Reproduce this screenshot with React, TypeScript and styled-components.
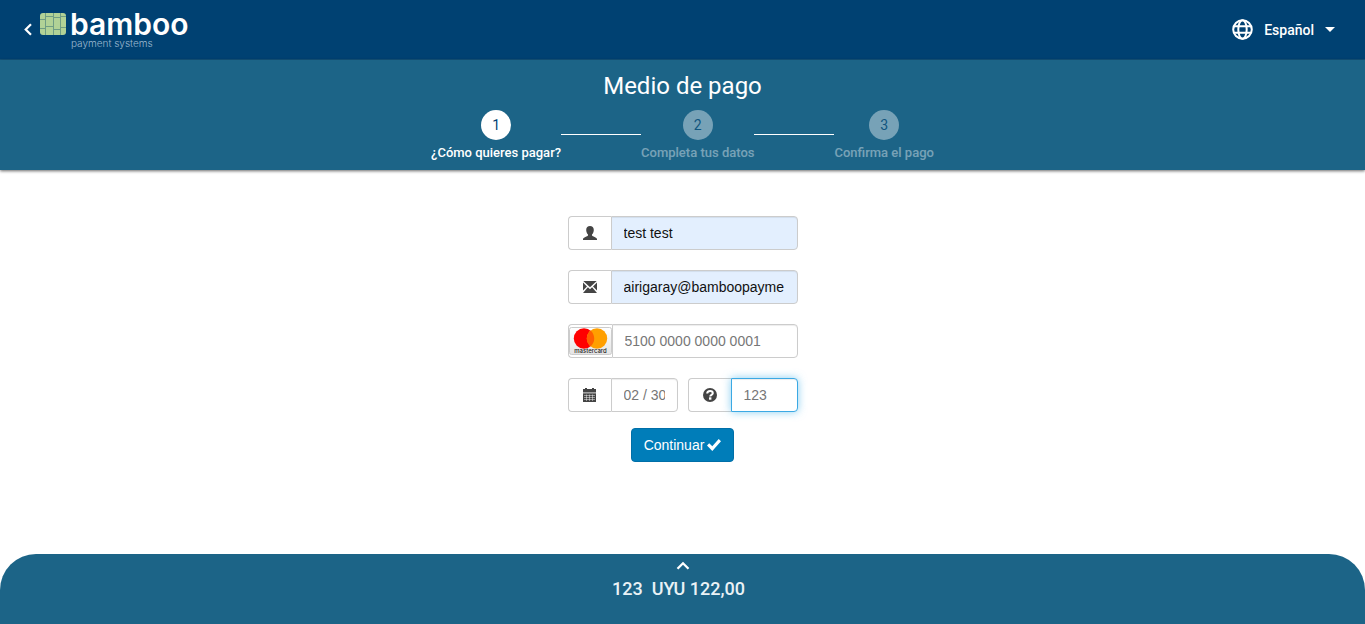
import React from "react";
import styled, { createGlobalStyle, css } from "styled-components";

const GlobalStyle = createGlobalStyle`
  *, *::before, *::after { box-sizing: border-box; }
  html, body, #root { height: 100%; }
  body {
    margin: 0;
    background: #fff;
    font-family: Roboto, "Liberation Sans", sans-serif;
  }
`;

const Page = styled.div`
  min-height: 100%;
  display: flex;
  flex-direction: column;
`;

const TopBar = styled.header`
  display: flex;
  align-items: center;
  justify-content: space-between;
  height: 60px;
  padding: 0 30px 0 24px;
  background: #004172;
  border-bottom: 1px solid #14547c;
  color: #fff;
`;

const Brand = styled.a`
  display: flex;
  align-items: center;
  gap: 8px;
  color: #fff;
  text-decoration: none;
`;

const Logo = styled.span`
  display: flex;
  align-items: flex-start;
  gap: 4px;
`;

const LogoWords = styled.span`
  display: flex;
  flex-direction: column;
  font-family: Inter, sans-serif;
`;

const LogoName = styled.span`
  font-size: 30px;
  line-height: 26px;
  font-weight: 600;
`;

const LogoTagline = styled.span`
  padding-left: 1px;
  font-size: 10px;
  line-height: 12px;
  font-weight: 300;
  color: #9db9d0;
`;

const LanguageButton = styled.button`
  display: flex;
  align-items: center;
  gap: 11px;
  padding: 0;
  border: 0;
  background: none;
  color: #fff;
  font: 500 14px/20px Roboto, sans-serif;
`;

const StepsBar = styled.section`
  display: flex;
  flex-direction: column;
  align-items: center;
  height: 110px;
  padding-top: 10px;
  background: #1c6487;
  color: #fff;
  box-shadow: 0 1px 3px rgba(0, 0, 0, 0.6);
`;

const Title = styled.h1`
  margin: 0 0 8px;
  font-size: 24px;
  line-height: 32px;
  font-weight: 400;
`;

const Steps = styled.ol`
  display: flex;
  margin: 0;
  padding: 0;
  list-style: none;
`;

const Step = styled.li<{ $active?: boolean }>`
  display: flex;
  flex-direction: column;
  align-items: center;
  gap: 4px;
  font-size: 13px;
  line-height: 18px;
  font-weight: 500;
  opacity: ${(p) => (p.$active ? 1 : 0.4)};
`;

const StepNumber = styled.span`
  width: 30px;
  height: 30px;
  border-radius: 50%;
  background: #fff;
  color: #004172;
  font-size: 14px;
  line-height: 30px;
  font-weight: 400;
  text-align: center;
`;

const StepLine = styled.li`
  width: 80px;
  height: 25px;
  border-bottom: 1px solid #fff;
`;

const Main = styled.main`
  flex: 1;
  display: flex;
  justify-content: center;
  padding: 46px 0 24px;
`;

const Form = styled.form`
  display: flex;
  flex-direction: column;
  align-items: center;
  width: 230px;
`;

const Row = styled.div`
  display: flex;
  gap: 10px;
  width: 100%;
  margin-bottom: 20px;

  &:last-of-type {
    margin-bottom: 16px;
  }
`;

const Group = styled.div`
  display: flex;
  flex: 1;
  min-width: 0;
  height: 34px;
`;

const Addon = styled.label<{ $card?: boolean }>`
  display: flex;
  align-items: center;
  justify-content: center;
  flex: none;
  width: ${(p) => (p.$card ? 44 : 43)}px;
  border: 1px solid #ccc;
  border-right: 0;
  border-radius: 4px 0 0 4px;
  color: #444;
`;

const Input = styled.input<{ $filled?: boolean; $focused?: boolean }>`
  flex: 1;
  min-width: 0;
  width: 0;
  padding: 6px 12px;
  border: 1px solid #ccc;
  border-radius: 0 4px 4px 0;
  background: ${(p) => (p.$filled ? "#e3effe" : "#fff")};
  color: #111;
  font: 14px/20px "Liberation Sans", Arial, sans-serif;
  box-shadow: inset 0 1px 1px rgba(0, 0, 0, 0.075);
  outline: 0;

  &::placeholder {
    color: #777;
    opacity: 1;
  }

  ${(p) =>
    p.$focused &&
    css`
      border-color: #3ba9e4;
      box-shadow: inset 0 1px 1px rgba(0, 0, 0, 0.075), 0 0 8px rgba(59, 175, 233, 0.6);
    `}
`;

const SubmitButton = styled.button`
  display: flex;
  align-items: center;
  gap: 3px;
  height: 34px;
  padding: 0 12px;
  border: 1px solid #006fa8;
  border-radius: 4px;
  background: #007db9;
  color: #fff;
  font: 14px/20px "Liberation Sans", Arial, sans-serif;
`;

const Summary = styled.footer`
  display: flex;
  flex-direction: column;
  align-items: center;
  height: 70px;
  padding-top: 7px;
  border-radius: 36px 36px 0 0;
  background: #1c6487;
  color: #fff;
`;

const Expand = styled.button`
  display: flex;
  padding: 0;
  border: 0;
  background: none;
  color: #fff;
`;

const Amount = styled.p`
  display: flex;
  gap: 9px;
  margin: 6px 0 0;
  padding-right: 8px;
  font-size: 18px;
  line-height: 24px;
  font-weight: 500;
  color: #eaf2f6;
`;

const BambooMark = () => (
  <svg width="26" height="26" viewBox="0 0 26 26" aria-hidden>
    <rect x="0" y="2" width="26" height="22" rx="3" fill="#b1d296" />
    <path
      d="M5.500 2v22M13.500 2v22M20.500 2v22M0 8.500h5.500M0 17.500h5.500M5.500 5.500h8M5.500 15.500h8M13.500 6.500h7M13.500 18.500h7M20.500 5.500h5.500M20.500 16.500h5.500"
      stroke="#6f9d84"
      strokeWidth="1"
      fill="none"
    />
  </svg>
);

const BackIcon = () => (
  <svg width="8" height="13" viewBox="0 0 8 13" fill="none" stroke="#fff" strokeWidth="2.200">
    <path d="M7 1.200 1.700 6.500 7 11.800" />
  </svg>
);

const GlobeIcon = () => (
  <svg width="21" height="21" viewBox="0 0 21 21" fill="none" stroke="#fff" strokeWidth="2">
    <circle cx="10.500" cy="10.500" r="9.300" />
    <ellipse cx="10.500" cy="10.500" rx="4.200" ry="9.300" />
    <path d="M1.800 7.300h17.400M1.800 13.700h17.400" />
  </svg>
);

const CaretIcon = () => (
  <svg width="10" height="5" viewBox="0 0 10 5" fill="#fff">
    <path d="M0 0h10L5 5z" />
  </svg>
);

const UserIcon = () => (
  <svg width="14" height="14" viewBox="0 0 14 14" fill="currentColor">
    <path d="M7 0C4.700 0 3.200 1.500 3.200 3.900c0 1.900.7 3.500 1.800 4.500v1C4.700 10.400 0 11.200 0 13v1h14v-1c0-1.800-4.700-2.600-5-3.600v-1c1.100-1 1.800-2.600 1.800-4.500C10.800 1.500 9.300 0 7 0z" />
  </svg>
);

const MailIcon = () => (
  <svg width="14" height="12" viewBox="0 0 14 12" fill="currentColor">
    <path d="M.3 0h13.400L7 6.200zM0 1.500 4 5.400 0 9.600zM14 1.500 10 5.400l4 4.200zM4.900 6.300 7 8.200l2.100-1.900L14 12H0z" />
  </svg>
);

const CalendarIcon = () => (
  <svg width="13" height="14" viewBox="0 0 13 14" fill="currentColor">
    <path d="M0 1h2V0h2v1h5V0h2v1h2v3.500H0z" />
    <path d="M0 5.300h13V14H0z" />
    <path d="M1 7.500h11M1 9.500h11M1 11.500h11M3.500 6.500v6.500M6.500 6.500v6.500M9.500 6.500v6.500" stroke="#fff" strokeWidth=".45" />
  </svg>
);

const HelpIcon = () => (
  <svg width="14" height="14" viewBox="0 0 14 14">
    <circle cx="7" cy="7" r="7" fill="currentColor" />
    <path d="M4.200 5.600C4.200 3.800 5.500 3 7.100 3s2.700.9 2.700 2.200c0 1.700-2.600 1.500-2.600 3.300" fill="none" stroke="#fff" strokeWidth="2" />
    <path d="M6 9.300h2.400v2.400H6z" fill="#fff" />
  </svg>
);

const MastercardIcon = () => (
  <svg width="43" height="30" viewBox="0 0 43 30" role="img" aria-label="mastercard">
    <defs>
      <linearGradient id="cardFace" x1="0" y1="0" x2="0" y2="1">
        <stop offset="0" stopColor="#fff" />
        <stop offset="1" stopColor="#e4e4e4" />
      </linearGradient>
    </defs>
    <rect x=".5" y="1.500" width="42" height="27" rx="2" fill="url(#cardFace)" stroke="#ccc" />
    <circle cx="15" cy="12.500" r="10.200" fill="#f00" />
    <circle cx="28" cy="12.500" r="10.200" fill="#ff9f00" />
    <path d="M21.500 4.600a10.200 10.200 0 0 1 0 15.800 10.200 10.200 0 0 1 0-15.800z" fill="#ff5f00" />
    <text x="21.500" y="27" textAnchor="middle" fontFamily="Inter, sans-serif" fontWeight="500" fontSize="6" fill="#222">mastercard</text>
  </svg>
);

const CheckIcon = () => (
  <svg width="14" height="12" viewBox="0 0 14 12" fill="#fff">
    <path d="M11.700 0 14 2.300 5.300 12 0 6.600l2.200-2.400 3.100 3z" />
  </svg>
);

const ChevronUpIcon = () => (
  <svg width="14" height="10" viewBox="0 0 14 10" fill="none" stroke="#fff" strokeWidth="2.300">
    <path d="M1.500 7.800 7 2.300l5.500 5.500" />
  </svg>
);

export default function App() {
  return (
    <Page>
      <GlobalStyle />
      <TopBar>
        <Brand href="#">
          <BackIcon />
          <Logo>
            <BambooMark />
            <LogoWords>
              <LogoName>bamboo</LogoName>
              <LogoTagline>payment systems</LogoTagline>
            </LogoWords>
          </Logo>
        </Brand>
        <LanguageButton type="button">
          <GlobeIcon />
          Español
          <CaretIcon />
        </LanguageButton>
      </TopBar>
      <StepsBar>
        <Title>Medio de pago</Title>
        <Steps>
          <Step $active>
            <StepNumber>1</StepNumber>
            ¿Cómo quieres pagar?
          </Step>
          <StepLine aria-hidden />
          <Step>
            <StepNumber>2</StepNumber>
            Completa tus datos
          </Step>
          <StepLine aria-hidden />
          <Step>
            <StepNumber>3</StepNumber>
            Confirma el pago
          </Step>
        </Steps>
      </StepsBar>
      <Main>
        <Form onSubmit={(e) => e.preventDefault()}>
          <Row>
            <Group>
              <Addon htmlFor="name"><UserIcon /></Addon>
              <Input id="name" aria-label="Nombre" $filled defaultValue="test test" />
            </Group>
          </Row>
          <Row>
            <Group>
              <Addon htmlFor="email"><MailIcon /></Addon>
              <Input id="email" aria-label="Email" $filled defaultValue="airigaray@bamboopayme" />
            </Group>
          </Row>
          <Row>
            <Group>
              <Addon htmlFor="card" $card><MastercardIcon /></Addon>
              <Input id="card" aria-label="Tarjeta" placeholder="5100 0000 0000 0001" />
            </Group>
          </Row>
          <Row>
            <Group>
              <Addon htmlFor="expiry"><CalendarIcon /></Addon>
              <Input id="expiry" aria-label="Vencimiento" placeholder="02 / 30" />
            </Group>
            <Group>
              <Addon htmlFor="cvv"><HelpIcon /></Addon>
              <Input id="cvv" aria-label="CVV" $focused placeholder="123" />
            </Group>
          </Row>
          <SubmitButton type="submit">
            Continuar
            <CheckIcon />
          </SubmitButton>
        </Form>
      </Main>
      <Summary>
        <Expand type="button" aria-label="Ver detalle"><ChevronUpIcon /></Expand>
        <Amount>
          <span>123</span>
          <span>UYU 122,00</span>
        </Amount>
      </Summary>
    </Page>
  );
}
